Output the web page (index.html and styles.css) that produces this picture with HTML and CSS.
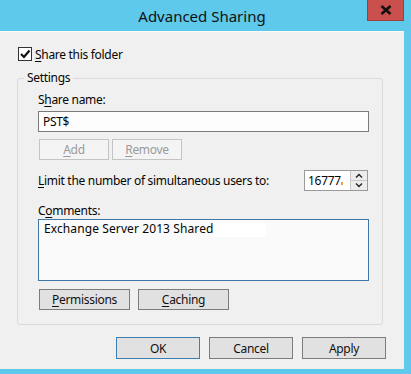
FILE: index.html
```html
<!DOCTYPE html>
<html lang="en">
<head>
  <meta charset="UTF-8">
  <title>Advanced Sharing</title>
  <link rel="stylesheet" href="styles.css">
</head>
<body>
  <div class="window">
    <div class="titlebar">
      <span class="title">Advanced Sharing</span>
      <button class="close" type="button">
        <svg width="12" height="10" viewBox="0 0 12 10">
          <path d="M1.5 1 L10.5 9 M10.5 1 L1.5 9" stroke="#111" stroke-width="2.6" />
        </svg>
      </button>
    </div>

    <div class="client">
      <label class="check-row">
        <span class="checkbox">
          <svg width="12" height="12" viewBox="0 0 12 12">
            <path d="M2 6 L5 9 L10.5 2.5" fill="none" stroke="#111" stroke-width="2.2" />
          </svg>
        </span>
        <span><u>S</u>hare this folder</span>
      </label>

      <fieldset class="settings">
        <legend>Settings</legend>

        <div class="field-label">S<u>h</u>are name:</div>
        <div class="textbox">PST$</div>

        <div class="btn-row">
          <button class="btn small" disabled><u>A</u>dd</button>
          <button class="btn small" disabled><u>R</u>emove</button>
        </div>

        <div class="limit-row">
          <span><u>L</u>imit the number of simultaneous users to:</span>
          <div class="spin">
            <div class="spin-value">16777<span class="caret"></span></div>
            <div class="spin-btns">
              <span class="spin-up">
                <svg width="8" height="5" viewBox="0 0 8 5"><path d="M1 4.5 L4 1.5 L7 4.5" fill="none" stroke="#222" stroke-width="1.4" /></svg>
              </span>
              <span class="spin-down">
                <svg width="8" height="5" viewBox="0 0 8 5"><path d="M1 0.5 L4 3.5 L7 0.5" fill="none" stroke="#222" stroke-width="1.4" /></svg>
              </span>
            </div>
          </div>
        </div>

        <div class="field-label comments-label">C<u>o</u>mments:</div>
        <div class="textarea">Exchange Server 2013 Shared<span class="blank"></span></div>

        <div class="btn-row wide">
          <button class="btn medium"><u>P</u>ermissions</button>
          <button class="btn medium"><u>C</u>aching</button>
        </div>
      </fieldset>

      <div class="footer">
        <button class="btn dialog default">OK</button>
        <button class="btn dialog">Cancel</button>
        <button class="btn dialog">Apply</button>
      </div>
    </div>
  </div>
</body>
</html>
```

FILE: styles.css
```css
html, body {
  margin: 0;
  padding: 0;
}
body {
  font-family: "Noto Sans", "Open Sans", sans-serif;
  font-size: 12px;
  letter-spacing: -0.3px;
  color: #050505;
  background: #5ec9ea;
}
.window {
  width: 411px;
  height: 374px;
  display: flex;
  flex-direction: column;
  background: #5ec9ea;
}
.titlebar {
  height: 31px;
  position: relative;
  display: flex;
  align-items: center;
  justify-content: center;
  padding-right: 7px;
}
.title {
  font-size: 15px;
  letter-spacing: 0;
  color: #111;
  padding-top: 1px;
}
.close {
  position: absolute;
  top: 0;
  right: 7px;
  width: 37px;
  height: 21px;
  padding: 0;
  border: 1px solid #a33c3c;
  border-top: none;
  background: #c9504d;
  display: flex;
  align-items: center;
  justify-content: center;
}
.client {
  flex: 1;
  margin: 0 7px 5px 0;
  background: #f0f0f0;
  border-top: 1px solid #fafafa;
  padding: 14px 17px 0 17px;
}
.check-row {
  display: flex;
  align-items: center;
  gap: 3px;
  height: 16px;
  padding-left: 1px;
}
.checkbox {
  width: 12px;
  height: 12px;
  border: 1px solid #333;
  background: #fff;
  display: flex;
  align-items: center;
  justify-content: center;
}
u {
  text-decoration-thickness: 1px;
  text-underline-offset: 2px;
}
.settings {
  margin: 8px 0 0 0;
  width: 366px;
  box-sizing: border-box;
  border: 1px solid #dadada;
  border-radius: 3px;
  padding: 6px 13px 14px 20px;
}
.settings legend {
  padding: 0 3px;
  margin-left: -14px;
  line-height: 16px;
}
.field-label {
  line-height: 16px;
}
.textbox {
  margin-top: 3px;
  height: 19px;
  border: 1px solid #7a7a7a;
  background: #fdfdfd;
  padding: 0 4px;
  line-height: 19px;
}
.btn {
  font-family: inherit;
  font-size: 12px;
  letter-spacing: -0.3px;
  color: #111;
  background: #e1e1e1;
  border: 1px solid #adadad;
  padding: 0;
  margin: 0;
}
.btn:disabled {
  background: #f4f4f4;
  border-color: #c4c4c4;
  color: #9a9a9a;
}
.btn-row {
  display: flex;
  gap: 3px;
  margin-top: 7px;
  padding-left: 1px;
}
.btn.small {
  width: 70px;
  height: 21px;
}
.limit-row {
  margin-top: 10px;
  display: flex;
  align-items: center;
  justify-content: space-between;
  padding-right: 1px;
}
.spin {
  display: flex;
  border: 1px solid #9a9a9a;
  background: #fff;
  width: 64px;
  box-sizing: border-box;
  height: 21px;
}
.spin-value {
  flex: 1;
  padding-left: 3px;
  line-height: 19px;
  border-right: 1px solid #c8c8c8;
  white-space: nowrap;
  overflow: hidden;
}
.caret {
  display: inline-block;
  width: 2px;
  height: 3px;
  background: #e89a3c;
  vertical-align: baseline;
}
.spin-btns {
  width: 16px;
  display: flex;
  flex-direction: column;
  background: #ececec;
}
.spin-btns span {
  flex: 1;
  display: flex;
  align-items: center;
  justify-content: center;
}
.spin-up {
  border-bottom: 1px solid #c8c8c8;
}
.comments-label {
  margin-top: 12px;
}
.textarea {
  height: 58px;
  border: 1px solid #3f77a8;
  background: #f9faf9;
  padding: 1px 5px;
  line-height: 16px;
  letter-spacing: 0.1px;
}
.blank {
  display: inline-block;
  width: 52px;
  height: 14px;
  background: #fff;
  vertical-align: top;
  margin-top: 2px;
}
.btn-row.wide {
  gap: 8px;
  margin-top: 8px;
}
.btn.medium {
  width: 91px;
  height: 21px;
  border-color: #7c7c7c;
}
.footer {
  display: flex;
  justify-content: flex-end;
  gap: 9px;
  margin-top: 12px;
  padding-right: 1px;
}
.btn.dialog {
  width: 84px;
  height: 22px;
  border-color: #7c7c7c;
}
.btn.default {
  border-color: #3c7fb1;
}
```
